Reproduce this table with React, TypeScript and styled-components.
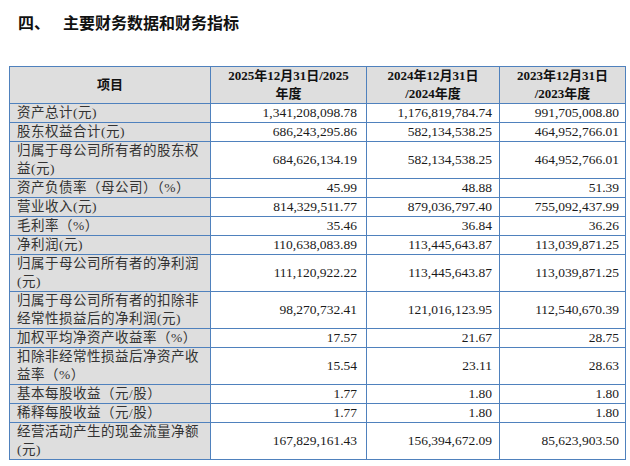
import React from 'react'
import styled, { createGlobalStyle } from 'styled-components'

const GlobalStyle = createGlobalStyle`
  html, body {
    margin: 0;
    padding: 0;
    background: #ffffff;
  }
`

const Page = styled.div`
  width: 630px;
  height: 466px;
  padding: 11px 0 0 9px;
  box-sizing: border-box;
  background: #fff;
  overflow: hidden;
`

const Title = styled.h2`
  margin: 0 0 33px 9px;
  display: flex;
  font-family: 'Noto Sans CJK SC', sans-serif;
  font-size: 16px;
  line-height: 22px;
  font-weight: 700;
  color: #111;
`

const TitleNum = styled.span`
  width: 45px;
`

const Table = styled.table`
  border-collapse: collapse;
  table-layout: fixed;
  width: 616px;
  font-family: 'Liberation Serif', 'Noto Sans CJK SC', serif;
  font-size: 13.5px;
  color: #1a1a1a;

  td,
  th {
    border: 1px solid #4f81bd;
    padding: 0;
  }
`

const HeadCell = styled.th`
  background: #dedede;
  font-weight: 700;
  font-size: 13px;
  line-height: 18px;
  text-align: center;
  vertical-align: middle;
  white-space: pre;
  padding: 0 2px !important;
  color: #111;
`

const Label = styled.td`
  background: #dedede;
  line-height: 18px;
  padding: 0 2px 0 7px !important;
  letter-spacing: 0.5px;
  white-space: pre;
  color: #333;
  vertical-align: middle;
`

const Num = styled.td<{ $pad: number }>`
  background: #fff;
  text-align: right;
  line-height: 18px;
  padding: 0 ${(p) => p.$pad}px 0 0 !important;
  vertical-align: middle;
`

const rows: [string, string, string, string][] = [
  ['资产总计(元)', '1,341,208,098.78', '1,176,819,784.74', '991,705,008.80'],
  ['股东权益合计(元)', '686,243,295.86', '582,134,538.25', '464,952,766.01'],
  ['归属于母公司所有者的股东权\n益(元)', '684,626,134.19', '582,134,538.25', '464,952,766.01'],
  ['资产负债率（母公司）（%）', '45.99', '48.88', '51.39'],
  ['营业收入(元)', '814,329,511.77', '879,036,797.40', '755,092,437.99'],
  ['毛利率（%）', '35.46', '36.84', '36.26'],
  ['净利润(元)', '110,638,083.89', '113,445,643.87', '113,039,871.25'],
  ['归属于母公司所有者的净利润\n(元)', '111,120,922.22', '113,445,643.87', '113,039,871.25'],
  ['归属于母公司所有者的扣除非\n经常性损益后的净利润(元)', '98,270,732.41', '121,016,123.95', '112,540,670.39'],
  ['加权平均净资产收益率（%）', '17.57', '21.67', '28.75'],
  ['扣除非经常性损益后净资产收\n益率（%）', '15.54', '23.11', '28.63'],
  ['基本每股收益（元/股）', '1.77', '1.80', '1.80'],
  ['稀释每股收益（元/股）', '1.77', '1.80', '1.80'],
  ['经营活动产生的现金流量净额\n(元)', '167,829,161.43', '156,394,672.09', '85,623,903.50'],
]

export default function App() {
  return (
    <Page>
      <GlobalStyle />
      <Title>
        <TitleNum>四、</TitleNum>
        <span>主要财务数据和财务指标</span>
      </Title>
      <Table>
        <colgroup>
          <col style={{ width: 201 }} />
          <col style={{ width: 156 }} />
          <col style={{ width: 133 }} />
          <col style={{ width: 126 }} />
        </colgroup>
        <thead>
          <tr>
            <HeadCell>项目</HeadCell>
            <HeadCell>{'2025年12月31日/2025\n年度'}</HeadCell>
            <HeadCell>{'2024年12月31日\n/2024年度'}</HeadCell>
            <HeadCell>{'2023年12月31日\n/2023年度'}</HeadCell>
          </tr>
        </thead>
        <tbody>
          {rows.map(([label, a, b, c]) => (
            <tr key={label}>
              <Label>{label}</Label>
              <Num $pad={9}>{a}</Num>
              <Num $pad={7}>{b}</Num>
              <Num $pad={6}>{c}</Num>
            </tr>
          ))}
        </tbody>
      </Table>
    </Page>
  )
}
